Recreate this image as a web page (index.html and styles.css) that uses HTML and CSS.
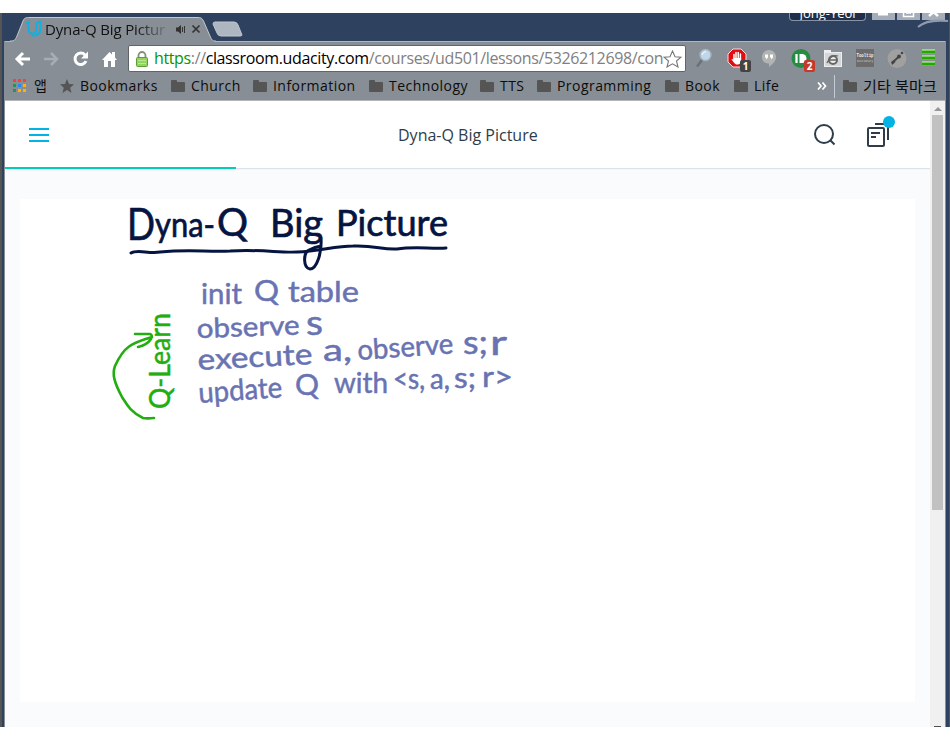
FILE: index.html
```
<!DOCTYPE html>
<html lang="ko">
<head>
<meta charset="utf-8">
<title>Dyna-Q Big Picture</title>
<link rel="stylesheet" href="styles.css">
</head>
<body>
<div class="window">
  <div class="tabstrip">
    <div class="tab">
      <svg class="tab-shape" width="206" height="29" viewBox="0 0 206 29"><path d="M0 28.500C5 28 5 27 7 23L13 8C14.500 4.500 16 4.500 20 4.500H187C191 4.500 192 5 193.500 8L200 23C202 27 202 28 206 28.500V29H0Z" fill="#878e95"/><path d="M0 28C5 28 5 27 7 23L13 8C14.500 4.500 16 4.500 20 4.500H187C191 4.500 192 5 193.500 8L200 23C202 27 202 28 206 28" fill="none" stroke="#c2c8ce"/></svg>
      <svg class="favicon" width="18" height="18" viewBox="0 0 18 18" fill="none" stroke="#12b0e0" stroke-width="1.900"><path d="M1 3.500L3.500 2V8.500C3.500 12 5 13.500 7.500 13.500C10.500 13.500 11.500 11.500 11.500 9V3L15.500 1.500V8.500C15.500 13.500 12 16.300 6.500 15.500"/></svg>
      <span class="tab-title">Dyna-Q Big Pictur</span>
      <svg class="sound" width="12" height="11" viewBox="0 0 12 11"><path d="M1 3.500H3L6 1V10L3 7.500H1Z" fill="#333"/><path d="M7.500 3V8M9.500 2V9" stroke="#333" fill="none"/></svg>
      <svg class="close" width="10" height="10" viewBox="0 0 10 10"><path d="M1.500 1.500L8.500 8.500M8.500 1.500L1.500 8.500" stroke="#333" stroke-width="1.700"/></svg>
    </div>
    <svg class="newtab" width="32" height="16" viewBox="0 0 32 16"><path d="M3 1H22Q25 1 26 4L30 14Q30 15 28 15H9Q6 15 5 12L1 3Q1 1 3 1Z" fill="#aeb6bf" stroke="#c0c7cf"/></svg>
    <div class="user"><span>Jong-Yeol</span></div>
    <div class="winbtns">
      <svg width="23" height="7"><path d="M6 1H16" stroke="#fff" stroke-width="3"/></svg>
      <svg width="23" height="7"><path d="M6.500 0V3.500H16.500V0M9 0H14" stroke="#fff" stroke-width="1.500" fill="none"/></svg>
      <svg width="23" height="7"><path d="M7 3L11.500 -1L16 3" stroke="#fff" stroke-width="2.500" fill="none"/></svg>
    </div>
    <svg class="swoosh" width="32" height="10" viewBox="0 0 32 10"><path d="M1 8C9 1 20 1 31 2" stroke="#8d9bad" stroke-width="2" fill="none"/></svg>
  </div>
  <div class="frame">
    <div class="chrome">
      <div class="toolbar">
        <div class="nav">
          <svg width="17" height="18" viewBox="0 0 17 18"><path d="M16 9H3M9 3L3 9L9 15" stroke="#fff" stroke-width="3" fill="none"/></svg>
          <svg width="17" height="18" viewBox="0 0 17 18"><path d="M1 9H14M8 3L14 9L8 15" stroke="#a7adb2" stroke-width="2.500" fill="none"/></svg>
          <svg width="17" height="18" viewBox="0 0 17 18"><path d="M13 5A5.700 5.700 0 1 0 14 11" stroke="#fff" stroke-width="3" fill="none"/><path d="M16 1.500V8.500H9Z" fill="#fff"/></svg>
          <svg width="17" height="18" viewBox="0 0 17 18"><path d="M1 10L8.500 2L11 4.500V2H14V7.500L16 10H14V17H10V11H7V17H3V10Z" fill="#fff"/></svg>
        </div>
        <div class="omnibox">
          <svg class="lock" width="12" height="16" viewBox="0 0 12 16"><path d="M2.500 8V4.500A3.500 3.500 0 0 1 9.500 4.500V8" stroke="#85907c" stroke-width="1.800" fill="none"/><rect x=".5" y="6.500" width="11" height="9" rx="1" fill="#92d45e" stroke="#5b9e35"/><path d="M2 9.500H10M2 12.500H10" stroke="#b8e894"/></svg>
          <span class="url"><span class="secure">https</span>://<b>classroom.udacity.com</b>/courses/ud501/lessons/5326212698/con</span>
          <svg class="star" width="19" height="18" viewBox="0 0 19 18"><path d="M9.500 1L12 6.800L18 7.200L13.500 11L15 17L9.500 13.800L4 17L5.500 11L1 7.200L7 6.800Z" fill="#fff" stroke="#777" stroke-width="1.100"/></svg>
        </div>
        <div class="extensions">
          <svg width="20" height="22" viewBox="0 0 20 22"><path d="M7 12L2 18.500" stroke="#69727b" stroke-width="2.600"/><circle cx="10.500" cy="7" r="5.500" fill="#bed8ea" stroke="#a3b1bd" stroke-width="1.400"/><path d="M7 7Q8 3.500 11 3.500" stroke="#fff" fill="none"/></svg>
          <div class="ext"><svg width="20" height="22" viewBox="0 0 20 22"><path d="M6 1H14L19 6V14L14 19H6L1 14V6Z" fill="#e20c13" stroke="#f7dcdc"/><path d="M7 12V6.500M9 11V4.500M11.200 11V4.500M13.400 12V6" stroke="#fff" stroke-width="1.500" stroke-linecap="round"/><path d="M6.300 10H14.100V13Q13 16.500 11 16.500H9Q7 15 4.500 11.500L5.500 11L6.500 12Z" fill="#fff"/></svg><span class="badge dark">1</span></div>
          <svg width="20" height="22" viewBox="0 0 20 22"><path d="M10 2C14 2 17 5 17 9C17 13.500 13 16.500 10 19V15.500C6 15.500 3 13.500 3 9C3 5 6 2 10 2Z" fill="#b2b4b4"/><path d="M6 6.500H9V9.500L7 11.500V9.500H6ZM11 6.500H14V9.500L12 11.500V9.500H11Z" fill="#fff"/></svg>
          <div class="ext"><svg width="20" height="22" viewBox="0 0 20 22"><circle cx="10" cy="10.500" r="9.500" fill="#278c43"/><path d="M5.500 6V15" stroke="#fff" stroke-width="2.300"/><path d="M8.500 6H11A4.500 4.500 0 0 1 11 15H8.500Z" fill="#fff"/></svg><span class="badge red">2</span></div>
          <svg width="20" height="22" viewBox="0 0 20 22"><path d="M1 2H8V4H19V19H1Z" fill="#eee"/><rect x="2" y="5" width="16" height="13" fill="#d4d7d9"/><circle cx="10" cy="12" r="4" fill="#eee" stroke="#666" stroke-width="2"/><path d="M7 12H13M4 15Q8 6 15 8" stroke="#666" stroke-width="1.300" fill="none"/></svg>
          <svg width="20" height="22" viewBox="0 0 20 22"><rect x="1" y="1" width="18" height="18" fill="#6c6c6c"/><text x="1.500" y="9" textLength="17" lengthAdjust="spacingAndGlyphs" class="tooltip-big">Tooltip</text><text x="2" y="14" textLength="16" lengthAdjust="spacingAndGlyphs" class="tooltip-small">Dictionary</text></svg>
          <svg width="20" height="22" viewBox="0 0 20 22"><circle cx="10" cy="10.500" r="9.500" fill="#a0a0a0"/><path d="M6 14L12 8.500" stroke="#444" stroke-width="1.800"/><circle cx="12" cy="8.500" r="2" fill="#444"/><circle cx="15" cy="5" r="1.300" fill="#444"/><path d="M4 14L7 12L8.500 14L5 17Z" fill="#444"/></svg>
          <svg width="20" height="22" viewBox="0 0 20 22"><path d="M3 3.500H16M3 9.500H16M3 15.500H16" stroke="#d7f7cb" stroke-width="4"/><path d="M3 4H16M3 10H16M3 16H16" stroke="#26a800" stroke-width="3"/></svg>
        </div>
      </div>
      <div class="bookmarks">
        <div class="bm apps"><svg width="13" height="14" viewBox="0 0 13 14"><path fill="#f44336" d="M0 0h3v3H0zM5 0h3v3H5zM10 0h3v3h-3z"/><path fill="#1e9850" d="M0 5h3v3H0zM0 10h3v3H0z"/><path fill="#2488f4" d="M5 5h3v3H5z"/><path fill="#ffb300" d="M10 5h3v3h-3zM5 10h3v3H5zM10 10h3v3h-3z"/></svg><span>앱</span></div>
        <div class="bm marks"><svg width="14" height="14" viewBox="0 0 14 14"><path d="M7 0L9 5L14 5.300L10.200 8.700L11.500 14L7 11L2.500 14L3.800 8.700L0 5.300L5 5Z" fill="#555"/></svg><span>Bookmarks</span></div>
        <div class="bm church"><i class="folder"></i><span>Church</span></div>
        <div class="bm info"><i class="folder"></i><span>Information</span></div>
        <div class="bm tech"><i class="folder"></i><span>Technology</span></div>
        <div class="bm tts"><i class="folder"></i><span>TTS</span></div>
        <div class="bm prog"><i class="folder"></i><span>Programming</span></div>
        <div class="bm book"><i class="folder"></i><span>Book</span></div>
        <div class="bm life"><i class="folder"></i><span>Life</span></div>
        <svg class="more" width="10" height="8" viewBox="0 0 10 8"><path d="M1 .5L4 4L1 7.500M5.500 .5L8.500 4L5.500 7.500" stroke="#fff" stroke-width="1.700" fill="none"/></svg>
        <div class="bm other"><i class="folder"></i><span>기타 북마크</span></div>
      </div>
    </div>
    <div class="viewport">
      <div class="page">
        <header class="topbar">
          <svg class="menu" width="20" height="14"><path d="M0 1H20M0 7H20M0 13H20" stroke="#02b3e4" stroke-width="2"/></svg>
          <h1>Dyna-Q Big Picture</h1>
          <svg class="search" width="22" height="22" viewBox="0 0 22 22"><circle cx="10" cy="10" r="9" stroke="#2e3d49" stroke-width="2" fill="none"/><path d="M16 16L20.500 20.500" stroke="#2e3d49" stroke-width="2"/></svg>
          <svg class="resources" width="30" height="32" viewBox="0 0 30 32"><g stroke="#2e3d49" stroke-width="2" fill="none"><rect x="2" y="12" width="16" height="18" rx="1"/><path d="M9 8H22V24M5 17H14M5 21H10"/></g><circle cx="23" cy="6" r="6" fill="#02b3e4"/></svg>
        </header>
        <div class="progress"><div class="progress-done"></div></div>
        <main class="slide">
          <svg class="board" width="895" height="503" viewBox="20 199 895 503">
            <g class="heading">
              <text x="127" y="240" font-size="44" textLength="28" lengthAdjust="spacingAndGlyphs">D</text>
              <text x="155" y="237" font-size="35" textLength="60" lengthAdjust="spacingAndGlyphs">yna-</text>
              <text x="217" y="236" font-size="38" textLength="31" lengthAdjust="spacingAndGlyphs">Q</text>
              <text x="270" y="237" font-size="38" textLength="53" lengthAdjust="spacingAndGlyphs">Big</text>
              <text x="336" y="236" font-size="36" textLength="112" lengthAdjust="spacingAndGlyphs">Picture</text>
            </g>
            <g class="rule">
              <path d="M131 253C137 249 149 254 160 252C190 249 205 252 230 251C260 249 280 253 297 252C320 251 335 246 353 246C375 245 382 250 397 249C415 246 430 249 446 248"/>
              <path d="M321 238C322 252 317 269 310 269C303 268 303 253 309 250Q315 247 321 246"/>
            </g>
            <g class="steps">
              <text x="201" y="304" font-size="29" textLength="41" lengthAdjust="spacingAndGlyphs">init</text>
              <text x="254" y="301" font-size="28" textLength="25" lengthAdjust="spacingAndGlyphs">Q</text>
              <text x="288" y="302" font-size="29" textLength="71" lengthAdjust="spacingAndGlyphs">table</text>
              <text x="197" y="338" font-size="27" textLength="103" lengthAdjust="spacingAndGlyphs" transform="rotate(-2 197 338)">observe</text>
              <text x="306" y="335" font-size="34" textLength="17" lengthAdjust="spacingAndGlyphs">s</text>
              <text x="198" y="370" font-size="29" textLength="115" lengthAdjust="spacingAndGlyphs" transform="rotate(-3 198 370)">execute</text>
              <text x="323" y="361" font-size="31" textLength="29" lengthAdjust="spacingAndGlyphs">a,</text>
              <text x="358" y="360" font-size="28" textLength="96" lengthAdjust="spacingAndGlyphs" transform="rotate(-4 358 360)">observe</text>
              <text x="463" y="354" font-size="32" textLength="25" lengthAdjust="spacingAndGlyphs">s;</text>
              <text x="490" y="355" font-size="34" textLength="17" lengthAdjust="spacingAndGlyphs">r</text>
              <text x="199" y="403" font-size="29" textLength="84" lengthAdjust="spacingAndGlyphs" transform="rotate(-4 199 403)">update</text>
              <text x="295" y="395" font-size="28" textLength="24" lengthAdjust="spacingAndGlyphs">Q</text>
              <text x="334" y="393" font-size="28" textLength="54" lengthAdjust="spacingAndGlyphs">with</text>
              <text x="393" y="389" font-size="29" textLength="32" lengthAdjust="spacingAndGlyphs">&lt;s,</text>
              <text x="430" y="389" font-size="28" textLength="20" lengthAdjust="spacingAndGlyphs">a,</text>
              <text x="454" y="388" font-size="29" textLength="22" lengthAdjust="spacingAndGlyphs">s;</text>
              <text x="482" y="387" font-size="29" textLength="31" lengthAdjust="spacingAndGlyphs">r&gt;</text>
            </g>
            <g class="loop">
              <text x="170" y="409" font-size="28" textLength="96" lengthAdjust="spacingAndGlyphs" transform="rotate(-90 170 409)">Q-Learn</text>
              <path d="M154 418C150 418 148 419 143 418C130 412 126 403 122 397C114 382 112 374 115 366C124 346 132 343 152 337M135 334H150Q153 335 151 339Q147 345 138 347"/>
            </g>
          </svg>
        </main>
      </div>
      <div class="scrollbar"><i class="arrow-up"></i><i class="thumb"></i><i class="arrow-down"></i></div>
    </div>
  </div>
</div>
</body>
</html>
```
FILE: styles.css
```
* { box-sizing: border-box; }
body { margin: 0; background: #fff; font-family: "Open Sans", "Noto Sans CJK KR", sans-serif; }
svg { display: block; flex: none; }

.window { height: 714px; margin-top: 13px; display: flex; flex-direction: column; overflow: hidden; background: #2e415e; border-left: 2px solid #555; border-right: 1px solid #555; }

.tabstrip { position: relative; height: 28px; display: flex; padding-left: 8px; flex: none; }
.tab { position: relative; width: 206px; height: 28px; display: flex; align-items: center; padding: 4px 0 0 15px; }
.tab-shape { position: absolute; left: 0; top: 0; }
.favicon, .tab-title, .sound, .close { position: relative; }
.tab-title { margin-left: 2px; width: 121px; font-size: 15px; font-weight: 500; line-height: 20px; letter-spacing: -0.15px; white-space: nowrap; overflow: hidden; color: transparent; background: linear-gradient(90deg, #111 75%, #878e95 105%); background-clip: text; -webkit-background-clip: text; }
.sound { margin-left: 9px; }
.close { margin-left: 4px; }
.newtab { margin: 8px 0 0 -4px; }
.user { margin-left: auto; width: 77px; height: 8px; overflow: hidden; border: 1px solid #8793a5; border-top: 0; border-radius: 0 0 4px 4px; background: #202f49; color: #fff; font-size: 13px; text-align: center; }
.user span { display: block; margin-top: -10px; line-height: 20px; }
.winbtns { display: flex; gap: 2px; margin: 0 4px 0 6px; height: 7px; }
.winbtns svg { background: #a4adb8; }
.swoosh { position: absolute; right: 0; top: 6px; }

.frame { flex: 1; min-height: 0; display: flex; flex-direction: column; margin: 0 3px 0 2px; border-left: 1px solid #878e95; border-right: 1px solid #878e95; }
.chrome { height: 60px; flex: none; background: #878e95; border-top: 1px solid #b0b6bc; border-bottom: 1px solid #b5b5b5; }
.toolbar { display: flex; height: 30px; padding: 3px 0 0 9px; }
.nav { display: flex; gap: 12px; padding-top: 5px; width: 114px; }
.omnibox { width: 558px; height: 27px; display: flex; align-items: center; padding: 0 3px 0 7px; background: #fff; border: 1px solid #5f656b; border-radius: 2px; flex: none; }
.url { margin-left: 6px; flex: 1; min-width: 0; font-size: 16px; letter-spacing: -0.37px; color: #808080; white-space: nowrap; line-height: 22px; padding-bottom: 2px; }
.url b { font-weight: 400; color: #000; }
.secure { color: #079500; }
.extensions { display: flex; gap: 12px; margin-left: 9px; padding-top: 3px; }
.ext { position: relative; }
.badge { position: absolute; left: 13px; top: 12px; width: 11px; height: 12px; border-radius: 2px; color: #fff; font: bold 10px/12px "Open Sans", sans-serif; text-align: center; }
.dark { background: #444; }
.red { background: #c5392b; }
.tooltip-big { font: bold 6px "Liberation Mono", monospace; fill: #eee; }
.tooltip-small { font: 4px "Liberation Mono", monospace; fill: #ccc; }

.bookmarks { display: flex; align-items: center; height: 28px; padding-left: 8px; font-size: 14px; font-weight: 500; letter-spacing: 0.45px; color: #0c0c0c; }
.bm { display: flex; align-items: center; gap: 6px; flex: none; white-space: nowrap; line-height: 20px; }
.folder { position: relative; width: 14px; height: 10px; margin-top: 2px; border-radius: 1px; background: #555; flex: none; }
.folder::before { content: ""; position: absolute; left: 0; top: -2px; width: 6px; height: 3px; border-radius: 1px; background: #555; }
.apps { width: 47px; gap: 8px; font-weight: 400; }
.marks { width: 111px; }
.church { width: 82px; }
.info { width: 116px; }
.tech { width: 111px; }
.tts { width: 57px; }
.prog { width: 128px; }
.book { width: 69px; }
.life { width: 83px; }
.other { margin-left: 7px; padding-left: 8px; height: 23px; border-left: 1px solid #c3ccd6; font-size: 15px; font-weight: 400; letter-spacing: 0.2px; }

.viewport { flex: 1; min-height: 0; display: flex; }
.page { width: 925px; background: #fafbfd; }
.topbar { height: 66px; display: flex; align-items: center; background: #fff; padding: 2px 34px 0 24px; }
.topbar h1 { margin: 0 auto 0 349px; font-size: 16px; line-height: 24px; font-weight: 400; color: #2e3d49; }
.resources { margin: -7px 0 0 30px; }
.progress { height: 3px; background: linear-gradient(#fff 0 1px, #dbe2e8 1px 2px, #f3f5f8 2px); }
.progress-done { width: 231px; height: 2px; background: #02ccba; }
.slide { margin: 29px 0 0 15px; width: 895px; height: 503px; background: #fff; }
.board text { font-family: Lato, "Open Sans", sans-serif; stroke-linejoin: round; }
.heading text { fill: #061441; stroke: #061441; stroke-width: .7px; }
.steps text { fill: #6973b2; stroke: #6973b2; stroke-width: .5px; }
.loop text { fill: #22ad10; stroke: #22ad10; stroke-width: .5px; }
.rule path, .loop path { fill: none; stroke: #061441; stroke-width: 3; stroke-linecap: round; stroke-linejoin: round; }
.loop path { stroke: #22ad10; stroke-width: 2.600; }

.scrollbar { width: 15px; display: flex; flex-direction: column; align-items: center; background: #f0f0f0; }
.arrow-up { margin-top: 6px; border: 4px solid transparent; border-top: 0; border-bottom-color: #969696; }
.thumb { margin-top: 4px; width: 11px; height: 395px; background: #c1c1c1; }
.arrow-down { margin-top: auto; width: 7px; height: 1px; background: #505050; }
```
